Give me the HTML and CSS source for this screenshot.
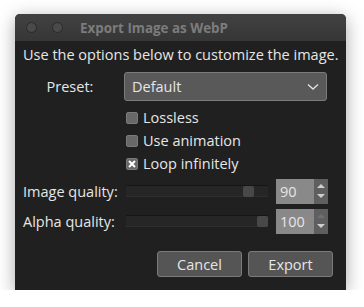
FILE: index.html
```html
<!DOCTYPE html>
<html lang="en">
<head>
    <meta charset="UTF-8">
    <meta name="viewport" content="width=device-width, initial-scale=1.0">
    <title>Export Image as WebP</title>
    <link rel="stylesheet" href="styles.css">
</head>
<body>
    <div class="window">
        <div class="titlebar">
            <span class="dot"></span>
            <span class="dot"></span>
            <span class="title">Export Image as WebP</span>
        </div>
        <div class="content">
            <p class="intro">Use the options below to customize the image.</p>

            <div class="row preset-row">
                <label class="preset-label">Preset:</label>
                <div class="combo">
                    <span>Default</span>
                    <svg width="12" height="8" viewBox="0 0 12 8">
                        <path d="M1 1.5 L6 6 L11 1.5" fill="none" stroke="#e0e0e0" stroke-width="1.4"/>
                    </svg>
                </div>
            </div>

            <div class="checks">
                <div class="check"><span class="box"></span>Lossless</div>
                <div class="check"><span class="box"></span>Use animation</div>
                <div class="check"><span class="box checked">
                    <svg width="8" height="8" viewBox="0 0 8 8">
                        <path d="M1 1 L7 7 M7 1 L1 7" stroke="#fff" stroke-width="2"/>
                    </svg>
                </span>Loop infinitely</div>
            </div>

            <!-- quality sliders -->
            <div class="row slider-row">
                <label class="slider-label">Image quality:</label>
                <div class="track"><span class="handle" style="margin-left: 117px"></span></div>
                <div class="spin">
                    <span class="value">90</span>
                    <span class="arrows">
                        <span class="up"></span>
                        <span class="down"></span>
                    </span>
                </div>
            </div>
            <div class="row slider-row">
                <label class="slider-label">Alpha quality:</label>
                <div class="track"><span class="handle" style="margin-left: 131px"></span></div>
                <div class="spin">
                    <span class="value">100</span>
                    <span class="arrows">
                        <span class="up off"></span>
                        <span class="down"></span>
                    </span>
                </div>
            </div>

            <div class="buttons">
                <button>Cancel</button>
                <button>Export</button>
            </div>
        </div>
    </div>
</body>
</html>
```

FILE: styles.css
```css
body {
    margin: 0;
    padding: 14px 0 0 15px;
    background-color: #ffffff;
    font-family: "Open Sans", "Liberation Sans", sans-serif;
    font-size: 14.5px;
    color: #e6e6e6;
}
.window {
    width: 331px;
    height: 276px;
    background-color: #202020;
    border-radius: 5px 5px 0 0;
    box-shadow: 0 4px 18px rgba(0, 0, 0, 0.35);
    display: flex;
    flex-direction: column;
}
.titlebar {
    height: 27px;
    background: linear-gradient(#424242, #363636);
    border-radius: 5px 5px 0 0;
    display: flex;
    align-items: center;
    padding-left: 11px;
}
.dot {
    width: 9px;
    height: 9px;
    border-radius: 50%;
    background-color: #4a4a4a;
    border: 1px solid #2a2a2a;
    margin-right: 15px;
}
.title {
    margin-left: 2px;
    font-weight: bold;
    font-size: 13.4px;
    color: #7c7c7c;
}
.content {
    padding: 0 8px;
    flex: 1;
    display: flex;
    flex-direction: column;
}
.intro {
    margin: 4px 0 0 0;
    line-height: 19px;
    white-space: nowrap;
}
.row {
    display: flex;
    align-items: center;
}
.preset-row {
    margin-top: 8px;
}
.preset-label {
    width: 94px;
    text-align: center;
}
.combo {
    margin-left: 7px;
    width: 203px;
    height: 29px;
    box-sizing: border-box;
    background-color: #595959;
    border: 1px solid #7b7b7b;
    border-radius: 3px;
    display: flex;
    align-items: center;
    justify-content: space-between;
    padding: 0 7px 0 7px;
}
.checks {
    margin: 5px 0 0 103px;
}
.check {
    display: flex;
    align-items: center;
    height: 23px;
}
.box {
    width: 12px;
    height: 12px;
    box-sizing: border-box;
    background-color: #686868;
    border: 1px solid #7a7a7a;
    border-radius: 2px;
    margin-right: 5px;
    display: flex;
    align-items: center;
    justify-content: center;
}
.slider-row {
    height: 26px;
    margin-top: 3px;
}
.slider-row + .slider-row {
    margin-top: 4px;
}
.slider-label {
    width: 103px;
    white-space: nowrap;
}
.track {
    width: 142px;
    height: 12px;
    box-sizing: border-box;
    background-color: #262626;
    border-top: 1px solid #161616;
    border-bottom: 1px solid #2e2e2e;
    display: flex;
    align-items: center;
}
.handle {
    width: 11px;
    height: 11px;
    background-color: #484848;
    border-radius: 2px;
}
.spin {
    margin-left: 8px;
    width: 52px;
    height: 25px;
    display: flex;
}
.value {
    flex: 1;
    background-color: #898989;
    padding-left: 4px;
    line-height: 25px;
}
.arrows {
    width: 14px;
    background-color: #5f5f5f;
    display: flex;
    flex-direction: column;
    align-items: center;
    justify-content: space-around;
    padding: 3px 0;
}
.up {
    border-left: 4px solid transparent;
    border-right: 4px solid transparent;
    border-bottom: 4px solid #cfcfcf;
}
.down {
    border-left: 4px solid transparent;
    border-right: 4px solid transparent;
    border-top: 4px solid #cfcfcf;
}
.up.off {
    border-bottom-color: #707070;
}
.buttons {
    margin-top: auto;
    margin-bottom: 13px;
    display: flex;
    justify-content: flex-end;
    gap: 6px;
    padding-right: 5px;
}
button {
    width: 85px;
    height: 26px;
    background-color: #555555;
    color: #e6e6e6;
    border: 1px solid #7a7a7a;
    border-radius: 3px;
    font-family: inherit;
    font-size: 14.5px;
}
```
